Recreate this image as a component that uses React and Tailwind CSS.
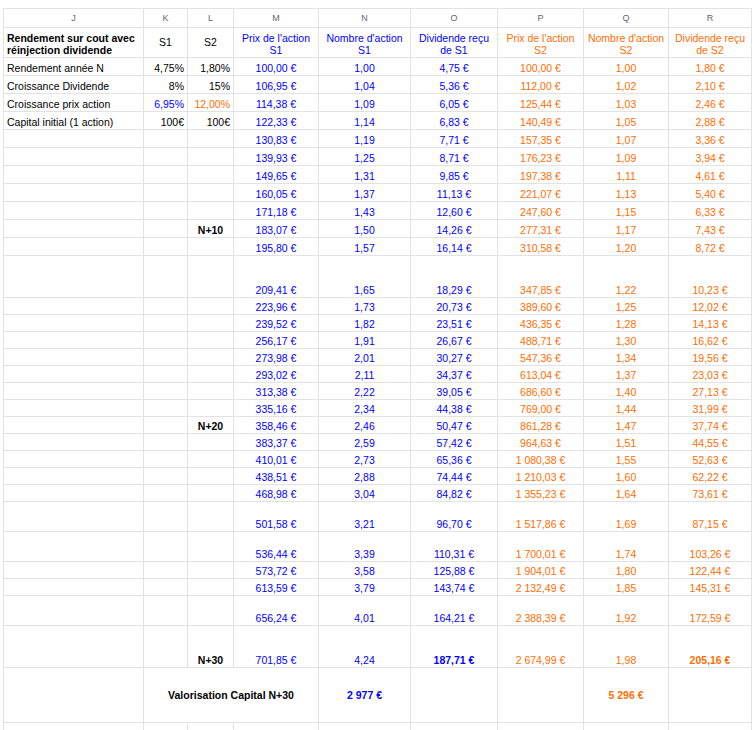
import React from 'react';

const COLS = 'grid grid-cols-[140px_44px_46px_85px_92px_87px_86px_85px_83px]';
const BLUE = 'text-[#0000ff]';
const ORANGE = 'text-[#ff6d01]';

// [height class, L label, M, N, O, P, Q, R, bold dividends]
const rows = [
  ['h-[18px]', '', '130,83 €', '1,19', '7,71 €', '157,35 €', '1,07', '3,36 €'],
  ['h-[18px]', '', '139,93 €', '1,25', '8,71 €', '176,23 €', '1,09', '3,94 €'],
  ['h-[18px]', '', '149,65 €', '1,31', '9,85 €', '197,38 €', '1,11', '4,61 €'],
  ['h-[18px]', '', '160,05 €', '1,37', '11,13 €', '221,07 €', '1,13', '5,40 €'],
  ['h-[18px]', '', '171,18 €', '1,43', '12,60 €', '247,60 €', '1,15', '6,33 €'],
  ['h-[18px]', 'N+10', '183,07 €', '1,50', '14,26 €', '277,31 €', '1,17', '7,43 €'],
  ['h-[18px]', '', '195,80 €', '1,57', '16,14 €', '310,58 €', '1,20', '8,72 €'],
  ['h-[42px]', '', '209,41 €', '1,65', '18,29 €', '347,85 €', '1,22', '10,23 €'],
  ['h-[17px]', '', '223,96 €', '1,73', '20,73 €', '389,60 €', '1,25', '12,02 €'],
  ['h-[17px]', '', '239,52 €', '1,82', '23,51 €', '436,35 €', '1,28', '14,13 €'],
  ['h-[17px]', '', '256,17 €', '1,91', '26,67 €', '488,71 €', '1,30', '16,62 €'],
  ['h-[17px]', '', '273,98 €', '2,01', '30,27 €', '547,36 €', '1,34', '19,56 €'],
  ['h-[17px]', '', '293,02 €', '2,11', '34,37 €', '613,04 €', '1,37', '23,03 €'],
  ['h-[17px]', '', '313,38 €', '2,22', '39,05 €', '686,60 €', '1,40', '27,13 €'],
  ['h-[17px]', '', '335,16 €', '2,34', '44,38 €', '769,00 €', '1,44', '31,99 €'],
  ['h-[17px]', 'N+20', '358,46 €', '2,46', '50,47 €', '861,28 €', '1,47', '37,74 €'],
  ['h-[17px]', '', '383,37 €', '2,59', '57,42 €', '964,63 €', '1,51', '44,55 €'],
  ['h-[17px]', '', '410,01 €', '2,73', '65,36 €', '1 080,38 €', '1,55', '52,63 €'],
  ['h-[17px]', '', '438,51 €', '2,88', '74,44 €', '1 210,03 €', '1,60', '62,22 €'],
  ['h-[17px]', '', '468,98 €', '3,04', '84,82 €', '1 355,23 €', '1,64', '73,61 €'],
  ['h-[30px]', '', '501,58 €', '3,21', '96,70 €', '1 517,86 €', '1,69', '87,15 €'],
  ['h-[30px]', '', '536,44 €', '3,39', '110,31 €', '1 700,01 €', '1,74', '103,26 €'],
  ['h-[17px]', '', '573,72 €', '3,58', '125,88 €', '1 904,01 €', '1,80', '122,44 €'],
  ['h-[17px]', '', '613,59 €', '3,79', '143,74 €', '2 132,49 €', '1,85', '145,31 €'],
  ['h-[30px]', '', '656,24 €', '4,01', '164,21 €', '2 388,39 €', '1,92', '172,59 €'],
  ['h-[42px]', 'N+30', '701,85 €', '4,24', '187,71 €', '2 674,99 €', '1,98', '205,16 €', true],
];

const params = [
  ['Rendement année N', '4,75%', '1,80%', '', '', '100,00 €', '1,00', '4,75 €', '100,00 €', '1,00', '1,80 €'],
  ['Croissance Dividende', '8%', '15%', '', '', '106,95 €', '1,04', '5,36 €', '112,00 €', '1,02', '2,10 €'],
  ['Croissance prix action', '6,95%', '12,00%', BLUE, ORANGE, '114,38 €', '1,09', '6,05 €', '125,44 €', '1,03', '2,46 €'],
  ['Capital initial (1 action)', '100€', '100€', '', '', '122,33 €', '1,14', '6,83 €', '140,49 €', '1,05', '2,88 €'],
];

function C({ children, className = '' }) {
  return (
    <div className={`flex border-r border-b border-[#e2e2e2] px-[3px] pb-[1px] leading-[12px] whitespace-nowrap ${className}`}>
      {children}
    </div>
  );
}

// centered, bottom-aligned value cell
function V({ children, className = '' }) {
  return <C className={`items-end justify-center ${className}`}>{children}</C>;
}

export default function App() {
  return (
    <div className="min-h-[730px] bg-white pt-[8px] pl-[3px] text-[10.5px] text-black font-['Liberation_Sans',Arial,sans-serif]">
      <div className="w-[749px] border-l border-t border-[#e2e2e2]">
        {/* column letters */}
        <div className={`${COLS} h-[19px] text-[9px] text-[#666]`}>
          {['J', 'K', 'L', 'M', 'N', 'O', 'P', 'Q', 'R'].map((l) => (
            <C key={l} className="items-center justify-center pb-0">{l}</C>
          ))}
        </div>

        {/* headers */}
        <div className={`${COLS} h-[30px]`}>
          <C className="items-end font-bold"><span>Rendement sur cout avec<br />réinjection dividende</span></C>
          <C className="items-center justify-center pb-0">S1</C>
          <C className="items-center justify-center pb-0">S2</C>
          <V className={`${BLUE} text-center`}><span>Prix de l'action<br />S1</span></V>
          <V className={`${BLUE} text-center`}><span>Nombre d'action<br />S1</span></V>
          <V className={`${BLUE} text-center`}><span>Dividende reçu<br />de S1</span></V>
          <V className={`${ORANGE} text-center`}><span>Prix de l'action<br />S2</span></V>
          <V className={`${ORANGE} text-center`}><span>Nombre d'action<br />S2</span></V>
          <V className={`${ORANGE} text-center`}><span>Dividende reçu<br />de S2</span></V>
        </div>

        {/* parameter rows */}
        {params.map((p) => (
          <div key={p[0]} className={`${COLS} h-[18px]`}>
            <C className="items-end">{p[0]}</C>
            <C className={`items-end justify-end ${p[3]}`}>{p[1]}</C>
            <C className={`items-end justify-end ${p[4]}`}>{p[2]}</C>
            <V className={BLUE}>{p[5]}</V>
            <V className={BLUE}>{p[6]}</V>
            <V className={BLUE}>{p[7]}</V>
            <V className={ORANGE}>{p[8]}</V>
            <V className={ORANGE}>{p[9]}</V>
            <V className={ORANGE}>{p[10]}</V>
          </div>
        ))}

        {/* yearly rows */}
        {rows.map((r) => (
          <div key={r[2]} className={`${COLS} ${r[0]}`}>
            <C />
            <C />
            <V className="font-bold">{r[1]}</V>
            <V className={BLUE}>{r[2]}</V>
            <V className={BLUE}>{r[3]}</V>
            <V className={`${BLUE} ${r[8] ? 'font-bold' : ''}`}>{r[4]}</V>
            <V className={ORANGE}>{r[5]}</V>
            <V className={ORANGE}>{r[6]}</V>
            <V className={`${ORANGE} ${r[8] ? 'font-bold' : ''}`}>{r[7]}</V>
          </div>
        ))}

        {/* total */}
        <div className={`${COLS} h-[55px] font-bold`}>
          <C />
          <C className="col-span-3 items-center justify-center">Valorisation Capital N+30</C>
          <C className={`items-center justify-center ${BLUE}`}>2 977 €</C>
          <C />
          <C />
          <C className={`items-center justify-center ${ORANGE}`}>5 296 €</C>
          <C />
        </div>

        <div className={`${COLS} h-[18px]`}>
          <C /><C /><C /><C /><C /><C /><C /><C /><C />
        </div>
      </div>
    </div>
  );
}
